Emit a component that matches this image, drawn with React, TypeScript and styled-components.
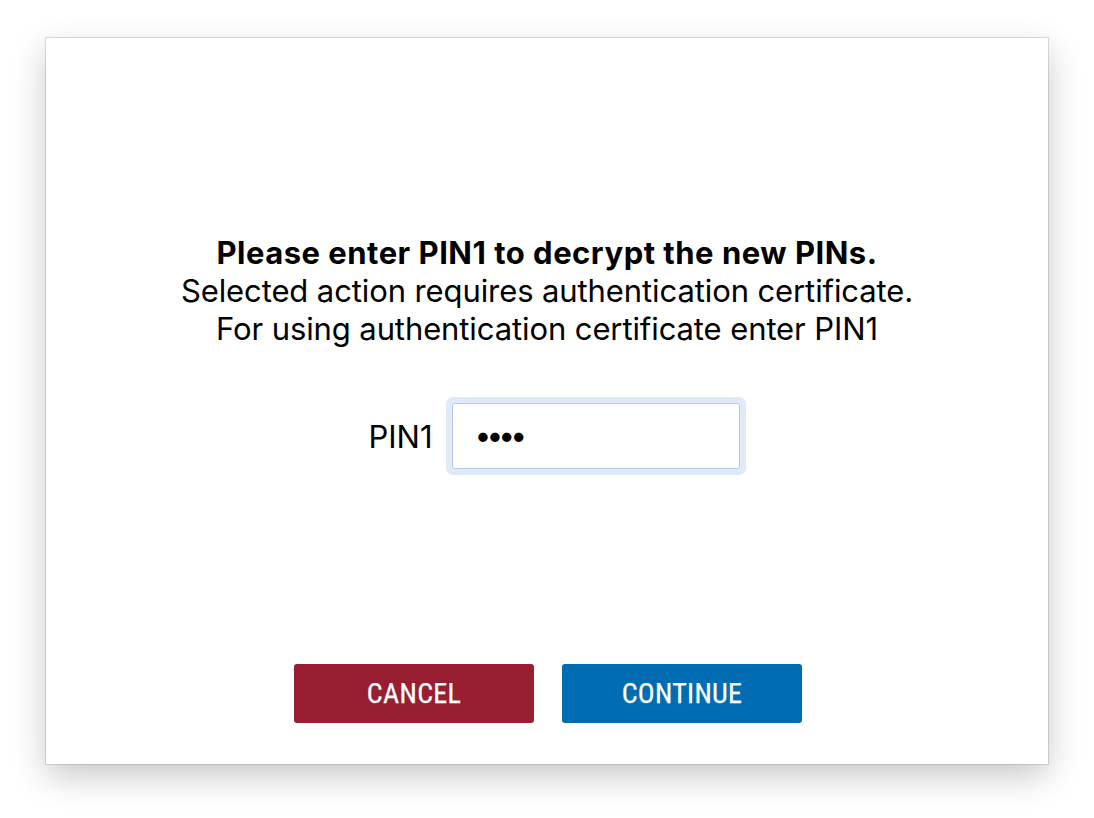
import React from "react";
import styled, { createGlobalStyle } from "styled-components";

const Global = createGlobalStyle`
  html, body { margin: 0; padding: 0; background: #ffffff; }
  body { font-family: Inter, "Noto Sans", sans-serif; color: #000; }
`;

const Page = styled.div`
  width: 1094px;
  height: 818px;
  padding: 38px 0 0 46px;
  box-sizing: border-box;
`;

const Window = styled.div`
  width: 1002px;
  height: 726px;
  background: #ffffff;
  box-sizing: border-box;
  box-shadow: 0 0 0 1px rgba(0, 0, 0, 0.12), 0 12px 32px rgba(0, 0, 0, 0.22);
  display: flex;
  flex-direction: column;
  align-items: center;
  padding-top: 196px;
`;

const Message = styled.div`
  text-align: center;
  font-size: 31px;
  line-height: 38px;
  letter-spacing: -0.1px;
`;

const Strong = styled.div`
  font-weight: 700;
  letter-spacing: 0.5px;
`;

const FieldRow = styled.div`
  margin-top: 49px;
  display: flex;
  align-items: center;
  gap: 13px;
  margin-left: 20px;
`;

const Label = styled.label`
  font-size: 31px;
`;

const Ring = styled.div`
  padding: 6px;
  border-radius: 7px;
  background: #dfe9f8;
`;

const Input = styled.input`
  width: 288px;
  height: 66px;
  box-sizing: border-box;
  border: 1.5px solid #b4c9e8;
  border-radius: 3px;
  padding: 0 22px 3px;
  font-size: 30px;
  font-family: Inter, sans-serif;
  letter-spacing: -5px;
  outline: none;
  background: #fff;
`;

const Buttons = styled.div`
  margin-top: 189px;
  margin-left: 2px;
  display: flex;
  gap: 28px;
`;

const Button = styled.button<{ $tone: "cancel" | "continue" }>`
  width: 240px;
  height: 59px;
  border: none;
  border-radius: 3px;
  background: ${(p) => (p.$tone === "cancel" ? "#981f32" : "#006db3")};
  color: #ffffff;
  font-family: "Roboto Condensed", "DejaVu Sans Condensed", Roboto, sans-serif;
  font-size: 28px;
  font-weight: 400;
  font-stretch: condensed;
  letter-spacing: 0.3px;
  -webkit-text-stroke: 0.25px #ffffff;
  cursor: pointer;
`;

export default function App() {
  return (
    <>
      <Global />
      <Page>
        <Window>
          <Message>
            <Strong>Please enter PIN1 to decrypt the new PINs.</Strong>
            <div>Selected action requires authentication certificate.</div>
            <div>For using authentication certificate enter PIN1</div>
          </Message>
          <FieldRow>
            <Label htmlFor="pin">PIN1</Label>
            <Ring>
              <Input id="pin" type="password" defaultValue="1234" />
            </Ring>
          </FieldRow>
          <Buttons>
            <Button $tone="cancel">CANCEL</Button>
            <Button $tone="continue">CONTINUE</Button>
          </Buttons>
        </Window>
      </Page>
    </>
  );
}
